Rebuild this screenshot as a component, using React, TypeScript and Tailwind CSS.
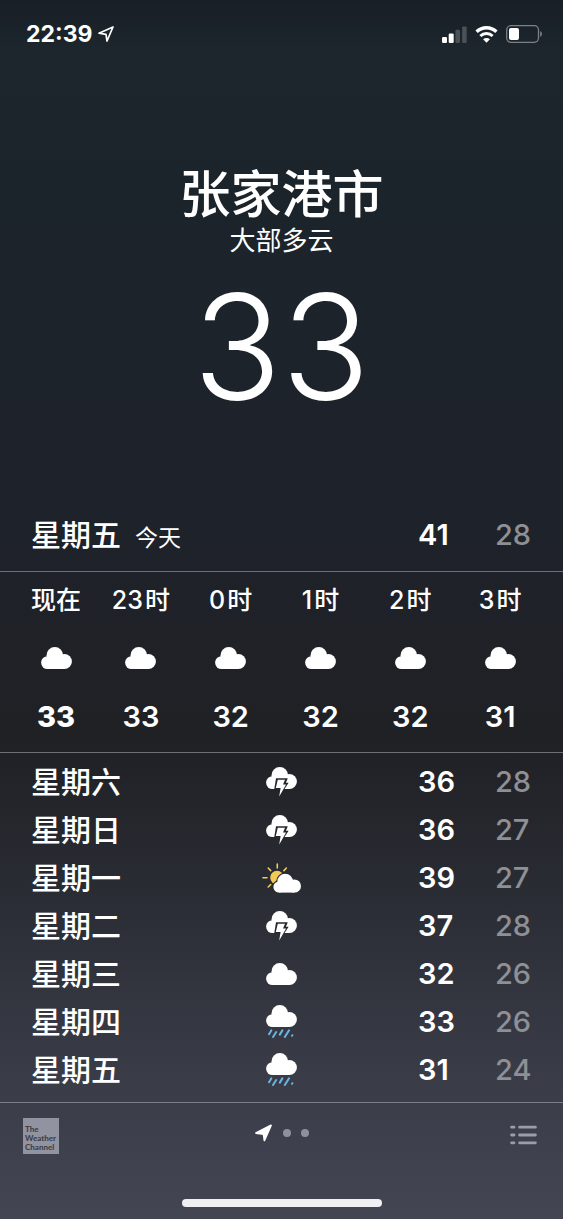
import { clsx } from 'clsx';

type Condition = 'cloudy' | 'thunder' | 'partly' | 'rain';

interface HourForecast {
  label: string;
  unit?: string;
  temp: number;
}

interface DayForecast {
  day: string;
  condition: Condition;
  high: number;
  low: number;
}

const hours: HourForecast[] = [
  { label: '现在', temp: 33 },
  { label: '23', unit: '时', temp: 33 },
  { label: '0', unit: '时', temp: 32 },
  { label: '1', unit: '时', temp: 32 },
  { label: '2', unit: '时', temp: 32 },
  { label: '3', unit: '时', temp: 31 },
];

const days: DayForecast[] = [
  { day: '星期六', condition: 'thunder', high: 36, low: 28 },
  { day: '星期日', condition: 'thunder', high: 36, low: 27 },
  { day: '星期一', condition: 'partly', high: 39, low: 27 },
  { day: '星期二', condition: 'thunder', high: 37, low: 28 },
  { day: '星期三', condition: 'cloudy', high: 32, low: 26 },
  { day: '星期四', condition: 'rain', high: 33, low: 26 },
  { day: '星期五', condition: 'rain', high: 31, low: 24 },
];

function CloudShape() {
  return (
    <g fill="#fff">
      <circle cx="13.8" cy="8.4" r="8.3" />
      <circle cx="23.4" cy="14.5" r="7.5" />
      <circle cx="6.5" cy="15.6" r="6.4" />
      <rect x="6.5" y="10" width="17" height="12" />
    </g>
  );
}

function CloudIcon() {
  return (
    <svg width="31" height="22" viewBox="0 0 31 22" aria-label="多云" role="img">
      <CloudShape />
    </svg>
  );
}

function ThunderIcon() {
  return (
    <svg width="31" height="30" viewBox="0 0 31 30" aria-label="雷阵雨" role="img">
      <CloudShape />
      <path d="M10 11.2H21.8L19.9 15.8H22.6L18.2 22.4H8.2Z" fill="#26272e" />
      <path d="M11.8 12.8H19L17 17.4H20.1L13.2 29.6L14.6 21H9.8Z" fill="#fff" />
    </svg>
  );
}

function PartlyIcon() {
  return (
    <svg width="40" height="30" viewBox="0 0 40 30" aria-label="晴间多云" role="img">
      <path
        d="M15.3 1V5M6.2 5L8.7 7.6M24.4 5L21.9 7.6M1 14.8H5M6.2 24L8.7 21.5"
        stroke="#f3cb52"
        strokeWidth="1.6"
        strokeLinecap="round"
      />
      <circle cx="15" cy="14.5" r="6.8" fill="#f3cb52" />
      <g stroke="#272932" strokeWidth="2.4" fill="#272932">
        <circle cx="23.2" cy="18.6" r="7.8" />
        <circle cx="17" cy="24" r="5.6" />
      </g>
      <g fill="#fff">
        <circle cx="23.2" cy="18.6" r="7.8" />
        <circle cx="32.4" cy="23" r="6.6" />
        <circle cx="17" cy="24" r="5.6" />
        <rect x="17" y="19.5" width="15.4" height="10.1" />
      </g>
    </svg>
  );
}

function RainIcon() {
  return (
    <svg width="31" height="34" viewBox="0 0 31 34" aria-label="雨" role="img">
      <CloudShape />
      <path
        d="M5.3 25.4L3 29.2M10.2 27L7 32M16.4 25.4L13.8 29.6M23 25.4L18.8 32M26.4 30.2L26 30.8"
        stroke="#6db3e2"
        strokeWidth="2"
        strokeLinecap="round"
        fill="none"
      />
    </svg>
  );
}

const conditionIcons = {
  cloudy: CloudIcon,
  thunder: ThunderIcon,
  partly: PartlyIcon,
  rain: RainIcon,
};

function StatusBar() {
  return (
    <div className="flex h-17 items-center justify-between pr-5 pl-[26px]">
      <div className="flex items-center gap-1.5">
        <time className="text-[23px] leading-7 font-bold">22:39</time>
        <svg width="16" height="16" viewBox="0 0 16 16" fill="none" aria-hidden="true">
          <path d="M15 1L9 15L8 8.4L1 7.2Z" stroke="#fff" strokeWidth="1.7" strokeLinejoin="round" />
        </svg>
      </div>
      <div className="flex items-center gap-2">
        <svg width="25" height="17" viewBox="0 0 25 17" aria-hidden="true">
          <rect x="0" y="11" width="5" height="6" rx="1.2" fill="#fff" />
          <rect x="6.7" y="7.6" width="5" height="9.4" rx="1.2" fill="#fff" />
          <rect x="13.4" y="3.8" width="4.6" height="13.2" rx="1.2" fill="#4a5157" />
          <rect x="20.1" y="0.4" width="4.6" height="16.6" rx="1.2" fill="#4a5157" />
        </svg>
        <svg width="23" height="17" viewBox="0 0 23 17" fill="none" aria-hidden="true">
          <path d="M1.6 5.8A14.2 14.2 0 0 1 21.4 5.8" stroke="#fff" strokeWidth="3.4" />
          <path d="M5.4 10A8.8 8.8 0 0 1 17.6 10" stroke="#fff" strokeWidth="3" />
          <path d="M8.1 13.3A4.9 4.9 0 0 1 14.9 13.3L11.5 16.8Z" fill="#fff" />
        </svg>
        <svg width="37" height="18" viewBox="0 0 37 18" aria-hidden="true">
          <rect x="0.7" y="0.7" width="31.8" height="16.6" rx="4.2" fill="none" stroke="#7b8185" strokeWidth="1.3" />
          <rect x="3" y="3" width="10" height="12" rx="2" fill="#fff" />
          <path d="M34.2 6V12A3.4 3.4 0 0 0 34.2 6Z" fill="#7b8185" />
        </svg>
      </div>
    </div>
  );
}

function Temps({ high, low }: { high: number; low: number }) {
  return (
    <div className="flex justify-end gap-10 text-[29px] font-semibold">
      <span className="w-[37px]">{high}</span>
      <span className="w-[37px] font-medium text-[#8e9095]">{low}</span>
    </div>
  );
}

export default function App() {
  return (
    <main className="flex min-h-screen flex-col bg-[linear-gradient(#191f27_0%,#1c262c_4%,#1c242b_18%,#1e222a_43%,#202125_61%,#2a2c34_73%,#3a3d48_89%,#434553_100%)] font-['Inter','Noto_Sans_CJK_SC',sans-serif] text-white">
      <StatusBar />

      <header className="flex flex-col items-center pt-[98px]">
        <h1 className="text-[51px] leading-[57px] font-medium">张家港市</h1>
        <p className="text-[26px] leading-9">大部多云</p>
        <p className="mt-4 text-[146px] leading-[144px] font-light">33</p>
      </header>

      <section className="mt-20 grid h-[73px] grid-cols-2 items-center border-b border-[#6d7176] px-[31px]">
        <h2 className="flex items-baseline gap-3.5 text-[30px] font-medium">
          星期五
          <span className="text-[23px] font-normal">今天</span>
        </h2>
        <Temps high={41} low={28} />
      </section>

      <ul className="grid grid-cols-[80px_repeat(5,1fr)] border-b border-[#6d7176] pt-2.5 pr-[18px] pb-4 pl-4">
        {hours.map((hour, i) => (
          <li key={hour.label} className="flex flex-col items-center">
            <div className="flex gap-0.5 text-[25px] leading-9 font-medium">
              <span>{hour.label}</span>
              {hour.unit ? <span>{hour.unit}</span> : null}
            </div>
            <div className="flex h-20 items-center">
              <CloudIcon />
            </div>
            <span className={clsx('text-[29px] leading-[38px]', i === 0 ? 'font-extrabold' : 'font-semibold')}>
              {hour.temp}
            </span>
          </li>
        ))}
      </ul>

      <ul className="border-b border-[#7b7e88] pt-[5px] pb-2">
        {days.map((item, i) => {
          const Icon = conditionIcons[item.condition];
          return (
            <li key={i} className="grid h-12 grid-cols-[1fr_auto_1fr] items-center px-[31px]">
              <span className="text-[30px] font-medium">{item.day}</span>
              <Icon />
              <Temps high={item.high} low={item.low} />
            </li>
          );
        })}
      </ul>

      <footer className="flex flex-1 flex-col justify-between pb-3">
        <div className="grid grid-cols-[1fr_auto_1fr] items-start pt-[15px] pr-[26px] pl-[23px]">
          <a
            href="#weather-channel"
            className="flex size-9 flex-col justify-end bg-[#9194a0] pb-0.5 pl-0.5 font-['Lato',sans-serif] text-[8px] leading-[9px] font-black text-[#3e414d]"
          >
            <span>The</span>
            <span>Weather</span>
            <span>Channel</span>
          </a>
          <nav className="flex items-center gap-2.5 pt-1.5 pl-1" aria-label="城市">
            <button type="button" aria-label="当前位置">
              <svg width="18" height="18" viewBox="0 0 18 18" aria-hidden="true">
                <path
                  d="M16 1.4L9.4 16.4L8.6 10.2L1 9Z"
                  fill="#fff"
                  stroke="#fff"
                  strokeWidth="1.8"
                  strokeLinejoin="round"
                />
              </svg>
            </button>
            <button type="button" aria-label="第2个城市" className="size-2 rounded-full bg-[#8f919a]" />
            <button type="button" aria-label="第3个城市" className="size-2 rounded-full bg-[#8f919a]" />
          </nav>
          <button type="button" aria-label="城市列表" className="mt-[7px] justify-self-end">
            <svg width="27" height="20" viewBox="0 0 27 20" aria-hidden="true">
              <path
                d="M1.6 2.2H4M9.6 2.2H25.4M1.6 10H4M9.6 10H25.4M1.6 17.8H4M9.6 17.8H25.4"
                stroke="#9b9da8"
                strokeWidth="2.8"
                strokeLinecap="round"
              />
            </svg>
          </button>
        </div>
        <div className="h-2 w-50 self-center rounded-full bg-[#f0eff1]" />
      </footer>
    </main>
  );
}
